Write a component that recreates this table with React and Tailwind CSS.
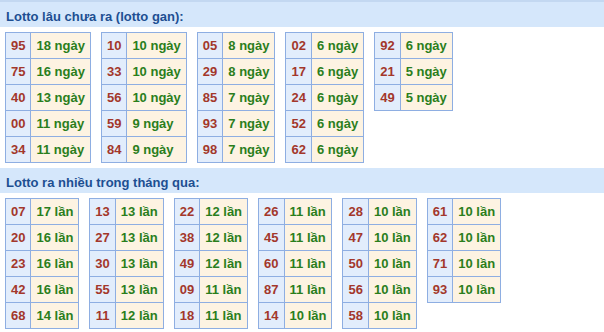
import React from "react";

const gan = [
  [["95", "18"], ["75", "16"], ["40", "13"], ["00", "11"], ["34", "11"]],
  [["10", "10"], ["33", "10"], ["56", "10"], ["59", "9"], ["84", "9"]],
  [["05", "8"], ["29", "8"], ["85", "7"], ["93", "7"], ["98", "7"]],
  [["02", "6"], ["17", "6"], ["24", "6"], ["52", "6"], ["62", "6"]],
  [["92", "6"], ["21", "5"], ["49", "5"]],
];

const nhieu = [
  [["07", "17"], ["20", "16"], ["23", "16"], ["42", "16"], ["68", "14"]],
  [["13", "13"], ["27", "13"], ["30", "13"], ["55", "13"], ["11", "12"]],
  [["22", "12"], ["38", "12"], ["49", "12"], ["09", "11"], ["18", "11"]],
  [["26", "11"], ["45", "11"], ["60", "11"], ["87", "11"], ["14", "10"]],
  [["28", "10"], ["47", "10"], ["50", "10"], ["56", "10"], ["58", "10"]],
  [["61", "10"], ["62", "10"], ["71", "10"], ["93", "10"]],
];

function LottoTable({ rows, unit }) {
  return (
    <table className="border-collapse border border-[#8eaee2] self-start">
      <tbody>
        {rows.map(([num, count]) => (
          <tr key={num} className="h-[26px]">
            <td className="border border-[#8eaee2] bg-[#e2edfc] px-[5px] text-center text-[#a3372b] leading-none">{num}</td>
            <td className="border border-[#8eaee2] bg-[#fdf3e2] px-[5px] whitespace-nowrap text-[#2a7e1c] leading-none">{count} {unit}</td>
          </tr>
        ))}
      </tbody>
    </table>
  );
}

export default function App() {
  return (
    <div className="w-[604px] h-[332px] bg-white overflow-hidden font-['Liberation_Sans',Arial,sans-serif] text-[13px] font-bold">
      <div className="h-[27px] bg-[#d5e7fb] border-t-2 border-[#c3d8f1] px-[6px] pt-[5px] text-[#1d4f92]">
        Lotto lâu chưa ra (lotto gan):
      </div>
      <div className="flex gap-[10px] pl-[5px] pt-[5px] h-[141px]">
        {gan.map((t, i) => (
          <LottoTable key={i} rows={t} unit="ngày" />
        ))}
      </div>
      <div className="h-[25px] bg-[#d5e7fb] px-[6px] pt-[5px] text-[#1d4f92]">
        Lotto ra nhiều trong tháng qua:
      </div>
      <div className="flex gap-[10px] pl-[5px] pt-[5px]">
        {nhieu.map((t, i) => (
          <LottoTable key={i} rows={t} unit="lần" />
        ))}
      </div>
    </div>
  );
}
